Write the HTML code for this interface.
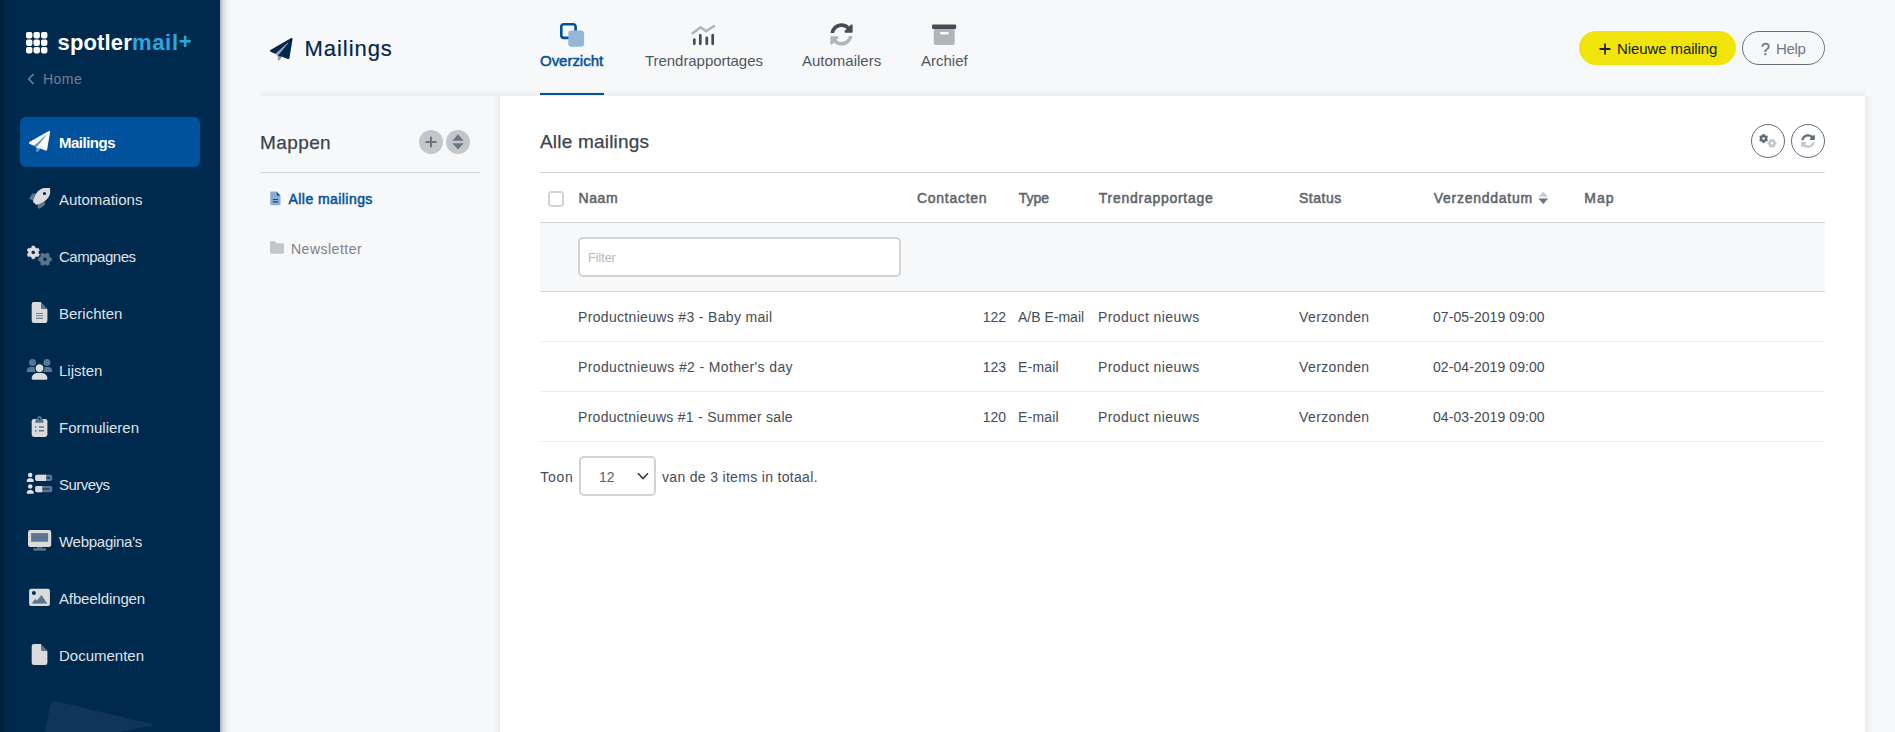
<!DOCTYPE html>
<html lang="nl">
<head>
<meta charset="utf-8">
<title>Mailings</title>
<style>
*{box-sizing:border-box;margin:0;padding:0}
html,body{width:1895px;height:732px;overflow:hidden}
body{font-family:"Liberation Sans",sans-serif;font-size:14px;color:#3d444d;background:#f7f8fa;position:relative}
.abs{position:absolute}
/* sidebar */
#side{position:absolute;left:0;top:0;width:220px;height:732px;background:#002a4d;overflow:hidden;z-index:5}
#side:before{content:"";position:absolute;left:0;top:0;width:11px;height:100%;background:linear-gradient(90deg,rgba(0,18,40,.5),rgba(0,18,40,.18) 45%,rgba(0,18,40,0))}
#sideshadow{position:absolute;left:220px;top:0;width:11px;height:732px;background:linear-gradient(90deg,rgba(0,0,0,.30),rgba(0,0,0,.15) 22%,rgba(0,0,0,.06) 50%,rgba(0,0,0,.015) 78%,rgba(0,0,0,0));z-index:4}
.logo-t{position:absolute;left:57.500px;top:29px;font-size:22px;font-weight:bold;color:#fff;letter-spacing:.15px;white-space:nowrap;line-height:28px}
.logo-t span{color:#29a8e0;letter-spacing:.7px}
.home{position:absolute;left:43px;top:70px;font-size:14px;line-height:18px;color:#75808d;letter-spacing:.45px}
.nav{position:absolute;left:20px;width:180px;height:50px;border-radius:6px;color:#dfe3e8;font-size:15px;line-height:52px;padding-left:39px;white-space:nowrap}
.nav.act{background:#00529c;color:#fff;font-weight:bold;letter-spacing:-.5px}
.nav svg{position:absolute}
/* header */
.title{position:absolute;left:304.500px;top:34.400px;font-size:22px;line-height:30px;color:#00274d;white-space:nowrap;letter-spacing:.95px;-webkit-text-stroke:.2px #00274d}
.tab{position:absolute;top:51px;font-size:15px;line-height:20px;color:#4f565e;white-space:nowrap}
.tab.act{color:#00529c;-webkit-text-stroke:.5px #00529c;letter-spacing:-.03px}
#tabline{position:absolute;left:540px;top:93px;width:64px;height:2px;background:#00529c;z-index:3}
.btn-new{position:absolute;left:1579px;top:31px;width:157px;height:34px;border-radius:17px;background:#f0e40a;color:#14181f;font-size:15px;line-height:36px;text-align:center;white-space:nowrap}
.btn-help{position:absolute;left:1742px;top:31px;width:83px;height:34px;border-radius:17px;border:1px solid #67727d;color:#6f7882;font-size:15px;line-height:34px;text-align:center;white-space:nowrap}
/* panels */
#left{position:absolute;left:260px;top:96px;width:240px;height:636px;background:#f7f8fa}
#panel{position:absolute;left:500px;top:96px;width:1365px;height:636px;background:#fff}
#topshadow{position:absolute;left:260px;top:89px;width:1605px;height:7px;background:linear-gradient(180deg,rgba(0,0,0,0),rgba(0,0,0,.012) 40%,rgba(0,0,0,.045))}
#rshadow{position:absolute;left:1865px;top:96px;width:8px;height:636px;background:linear-gradient(90deg,rgba(0,0,0,.05),rgba(0,0,0,.015) 55%,rgba(0,0,0,0))}
#lshadow{position:absolute;left:492px;top:96px;width:8px;height:636px;background:linear-gradient(270deg,rgba(0,0,0,.05),rgba(0,0,0,.015) 55%,rgba(0,0,0,0))}
.h2{position:absolute;font-size:19px;line-height:26px;color:#3d444d;white-space:nowrap;-webkit-text-stroke:.25px #3d444d}
.hr{position:absolute;height:1px;background:#d5d5d5}
.th{position:absolute;top:189px;font-size:14px;line-height:18px;-webkit-text-stroke:.5px #5c636b;color:#5c636b;white-space:nowrap}
.td{position:absolute;font-size:14px;line-height:18px;color:#454c55;white-space:nowrap}
.circ{position:absolute;width:24.200px;height:24.200px;border-radius:50%;background:#c3c6ca}
.ocirc{position:absolute;width:34px;height:34px;border-radius:50%;border:1px solid #626d78;background:#fff}
</style>
</head>
<body>
<div id="side">
  <svg class="abs" style="left:26px;top:32px" width="22" height="22" viewBox="0 0 22 22"><g fill="#fff"><rect x="0" y="0" width="6.4" height="6.4" rx="1.8"/><rect x="7.5" y="0" width="6.4" height="6.4" rx="1.8"/><rect x="15" y="0" width="6.4" height="6.4" rx="1.8"/><rect x="0" y="7.5" width="6.4" height="6.4" rx="1.8"/><rect x="7.5" y="7.5" width="6.4" height="6.4" rx="1.8"/><rect x="15" y="7.5" width="6.4" height="6.4" rx="1.8"/><rect x="0" y="15" width="6.4" height="6.4" rx="1.8"/><rect x="7.5" y="15" width="6.4" height="6.4" rx="1.8"/><rect x="15" y="15" width="6.4" height="6.4" rx="1.8"/></g></svg>
  <div class="logo-t">spotler<span>mail<i style="font-style:normal;position:relative;top:-1px">+</i></span></div>
  <svg class="abs" style="left:27px;top:73px" width="8" height="12" viewBox="0 0 8 12"><path d="M6.5 1 L1.8 6 L6.5 11" fill="none" stroke="#75808d" stroke-width="1.6"/></svg>
  <div class="home">Home</div>
  <div class="nav act" style="top:117px">Mailings</div>
  <div class="nav" style="top:174px">Automations</div>
  <div class="nav" style="top:231px;letter-spacing:-.48px">Campagnes</div>
  <div class="nav" style="top:288px">Berichten</div>
  <div class="nav" style="top:345px">Lijsten</div>
  <div class="nav" style="top:402px">Formulieren</div>
  <div class="nav" style="top:459px;letter-spacing:-.55px">Surveys</div>
  <div class="nav" style="top:516px;letter-spacing:-.27px">Webpagina's</div>
  <div class="nav" style="top:573px;letter-spacing:-.13px">Afbeeldingen</div>
  <div class="nav" style="top:630px">Documenten</div>

  <!-- sidebar icons -->
  <svg class="abs" style="left:29px;top:131px" width="21" height="21" viewBox="0 0 512 512"><path fill="#6697c4" d="M476 3.2L12.5 270.6c-18.1 10.4-15.8 35.600 2.2 43.2L121 358.4L176 407v80.500c0 23.600 28.500 32.900 42.500 15.800L282 426l124.600 52.2c14.2 6 30.400-2.900 33-18.200l72-432C515 7.800 493.300-6.800 476 3.2z"/><path fill="#fff" d="M476 3.2L12.5 270.6c-18.1 10.4-15.8 35.6 2.2 43.2L121 358.4l287.3-253.2c5.5-4.9 13.3 2.6 8.6 8.3L176 407l106 19 124.6 52.2c14.2 6 30.4-2.9 33-18.2l72-432C515 7.800 493.300-6.800 476 3.2z"/></svg>
  <svg class="abs" style="left:26px;top:185px" width="28" height="27" viewBox="26 185 28 27"><path fill="#5b7590" d="M32.300 193.400 H36.600 L33.700 200.700 L29.500 199 Q29 198.700 29.300 198.200Z M37.700 204 L44.900 201 V204.600 Q44.900 205 44.500 205.300 L39.800 208.700 Q39.300 209 38.900 208.600 L37.700 207.500Z"/><path fill="#dbdbdb" d="M50.100 188.700 Q50.100 188.100 49.500 188.100 L44.500 188.100 C40.500 188.400 36.800 191.600 34.800 196.200 L33.200 200.400 C32.900 201.300 33.100 202 33.700 202.600 L35.500 204.300 C36.100 204.800 36.900 204.900 37.700 204.600 L41.600 202.900 C46.200 200.700 49.500 197.200 50.100 193 Z"/><circle cx="44.500" cy="193.500" r="1.550" fill="#002a4d"/></svg>
  <svg class="abs" style="left:26px;top:245px" width="28" height="22" viewBox="0 0 28 22"><path fill="#dedede" fill-rule="evenodd" stroke="#dedede" stroke-width=".4" stroke-linejoin="round" d="M5.69 2.45 L5.93 0.94 L8.67 0.94 L8.91 2.45 L10.78 3.54 L12.20 2.98 L13.58 5.36 L12.39 6.32 L12.39 8.48 L13.58 9.44 L12.20 11.82 L10.78 11.26 L8.91 12.35 L8.67 13.86 L5.93 13.86 L5.69 12.35 L3.82 11.26 L2.40 11.82 L1.02 9.44 L2.21 8.48 L2.21 6.32 L1.02 5.36 L2.40 2.98 L3.82 3.54Z M5.35 7.40 a1.95 1.95 0 1 0 3.90 0 a1.95 1.95 0 1 0 -3.90 0Z"/><path fill="#5b7590" fill-rule="evenodd" stroke="#5b7590" stroke-width=".4" stroke-linejoin="round" d="M24.09 12.65 L25.65 12.89 L25.65 15.71 L24.09 15.95 L22.98 17.88 L23.55 19.35 L21.10 20.77 L20.11 19.53 L17.89 19.53 L16.90 20.77 L14.45 19.35 L15.02 17.88 L13.91 15.95 L12.35 15.71 L12.35 12.89 L13.91 12.65 L15.02 10.72 L14.45 9.25 L16.90 7.83 L17.89 9.07 L20.11 9.07 L21.10 7.83 L23.55 9.25 L22.98 10.72Z M17.05 14.30 a1.95 1.95 0 1 0 3.90 0 a1.95 1.95 0 1 0 -3.90 0Z"/></svg>
  <svg class="abs" style="left:30px;top:300px" width="20" height="25" viewBox="30 300 20 25"><path fill="#dbdbdb" d="M33.900 302 H41 V307.300 Q41 308.700 42.400 308.700 H47.400 V320.700 Q47.400 322.900 45.200 322.900 H33.900 Q31.700 322.900 31.700 320.700 V304.200 Q31.700 302 33.900 302Z"/><path fill="#5b7590" d="M41 302 L47.400 308.700 H42.400 Q41 308.700 41 307.300Z"/><path fill="#6b8299" d="M36 312.900h7v1.100h-7z M36 315.200h7v1.100h-7z M36 317.800h7v1.100h-7z"/></svg>
  <svg class="abs" style="left:25px;top:357px" width="30" height="25" viewBox="25 357 30 25"><circle cx="32.500" cy="362.500" r="3.500" fill="#5b7590"/><circle cx="46.900" cy="362.500" r="3.500" fill="#5b7590"/><path fill="#5b7590" d="M26.700 371 C26.700 368.500 28.500 366.900 30.500 366.900 H35 Q34.200 369 35.600 371.900 H27.600 Q26.700 371.900 26.700 371Z M52.300 371 C52.300 368.500 50.500 366.900 48.500 366.900 H44 Q44.800 369 43.400 371.900 H51.400 Q52.300 371.900 52.300 371Z"/><circle cx="39.500" cy="368.200" r="4.400" fill="#dbdbdb" stroke="#002a4d" stroke-width="1"/><path fill="#dbdbdb" d="M31.700 378.400 C31.700 375 34.500 372.900 37.500 372.900 H41.500 C44.500 372.900 47.400 375 47.400 378.400 Q47.400 379.800 46 379.800 H33.100 Q31.700 379.800 31.700 378.400Z"/></svg>
  <svg class="abs" style="left:30px;top:414px" width="20" height="25" viewBox="30 414 20 25"><rect x="31.700" y="418.900" width="15.700" height="18" rx="2.300" fill="#dbdbdb"/><path fill="#5b7590" d="M35.300 422.700 V420.600 Q35.300 419.200 36.700 419.200 H37.200 A2.400 2.400 0 1 1 41.800 419.200 H42.100 Q43.500 419.200 43.500 420.600 V422.700Z"/><circle cx="39.500" cy="418.700" r=".85" fill="#002a4d"/><circle cx="35.800" cy="427" r=".85" fill="#5b7590"/><circle cx="35.800" cy="430.800" r=".85" fill="#5b7590"/><rect x="38.800" y="426.300" width="5.300" height="1.400" rx=".4" fill="#5b7590"/><rect x="38.800" y="430.100" width="5.300" height="1.400" rx=".4" fill="#5b7590"/></svg>
  <svg class="abs" style="left:25px;top:471px" width="30" height="25" viewBox="25 471 30 25"><g fill="#e2e2e2"><circle cx="30.200" cy="475.100" r="2.250"/><path d="M26.700 481.200 C26.700 479.200 28.200 478.200 29.400 478.200 H31 C32.200 478.200 33.800 479.200 33.800 481.200 Q33.800 482 33 482 H27.500 Q26.700 482 26.700 481.200Z"/><circle cx="30.200" cy="486.600" r="2.250"/><path d="M26.700 492.900 C26.700 490.900 28.200 489.900 29.400 489.900 H31 C32.200 489.900 33.800 490.900 33.800 492.900 Q33.800 493.700 33 493.700 H27.500 Q26.700 493.700 26.700 492.900Z"/></g><rect x="35.200" y="474.700" width="17" height="6.300" rx="1.700" fill="#5b7590"/><rect x="46.300" y="476.900" width="3.500" height="1.800" fill="#1c3e60"/><path fill="#dbdbdb" d="M36.900 474.700 H46.100 V481 H36.900 Q35.200 481 35.200 479.300 V476.400 Q35.200 474.700 36.900 474.700Z"/><rect x="35.200" y="485.900" width="17" height="6.300" rx="1.700" fill="#5b7590"/><rect x="42.600" y="488.100" width="7" height="1.800" fill="#2a4a6b"/><path fill="#dbdbdb" d="M36.900 485.900 H42.200 V492.200 H36.900 Q35.200 492.200 35.200 490.500 V487.600 Q35.200 485.900 36.900 485.900Z"/></svg>
  <svg class="abs" style="left:26px;top:528px" width="28" height="25" viewBox="26 528 28 25"><rect x="28" y="530.100" width="23.200" height="17" rx="2.400" fill="#dbdbdb"/><rect x="31.100" y="533.100" width="17" height="8.600" fill="#5b7590"/><rect x="37.200" y="547.100" width="4.800" height="1.600" fill="#4f6a85"/><rect x="33.200" y="548.300" width="12.900" height="2.500" rx="1.200" fill="#5b7590"/></svg>
  <svg class="abs" style="left:27px;top:586px" width="26" height="23" viewBox="27 586 26 23"><rect x="29.100" y="588.700" width="20.800" height="17.400" rx="2.100" fill="#dbdbdb"/><circle cx="33.900" cy="593" r="1.950" fill="#002a4d"/><path fill="#5b7590" stroke="#5b7590" stroke-width=".6" stroke-linejoin="round" d="M32.200 603.300 L35.300 599.300 L37.200 600.800 L41.400 595.300 L46.700 603.300Z"/></svg>
  <svg class="abs" style="left:30px;top:642px" width="20" height="25" viewBox="30 642 20 25"><path fill="#dbdbdb" d="M33.900 644 H41 V649.300 Q41 650.700 42.400 650.700 H47.400 V662.700 Q47.400 664.900 45.200 664.900 H33.900 Q31.700 664.900 31.700 662.700 V646.200 Q31.700 644 33.900 644Z"/><path fill="#5b7590" d="M41 644 L47.400 650.700 H42.400 Q41 650.700 41 649.300Z"/></svg>
  <svg class="abs" style="left:40px;top:696px" width="130" height="40" viewBox="0 0 130 40"><path d="M16.500 5.300 L115 29 L60 40 L4 40 L10.500 8.500 Q11.800 4.200 16.500 5.300Z" fill="#0f3558"/></svg>
</div>
<div id="sideshadow"></div>


<!-- header icons -->
<svg class="abs" style="left:270px;top:38px" width="22.500" height="22.500" viewBox="0 0 512 512"><path fill="#94a4b5" d="M476 3.2L12.5 270.6c-18.1 10.4-15.8 35.600 2.2 43.2L121 358.4L176 407v80.500c0 23.600 28.500 32.900 42.500 15.800L282 426l124.600 52.2c14.2 6 30.400-2.900 33-18.200l72-432C515 7.800 493.300-6.800 476 3.2z"/><path fill="#00274d" d="M476 3.2L12.5 270.6c-18.1 10.4-15.8 35.6 2.2 43.2L121 358.4l287.3-253.2c5.5-4.9 13.3 2.6 8.6 8.3L176 407l106 19 124.6 52.2c14.2 6 30.4-2.9 33-18.2l72-432C515 7.800 493.300-6.800 476 3.2z"/></svg>
<svg class="abs" style="left:558px;top:21px" width="28" height="28" viewBox="558 21 28 28"><rect x="561.300" y="24.200" width="14.300" height="13.700" rx="2.600" fill="none" stroke="#00529c" stroke-width="2.600"/><rect x="568.300" y="30.400" width="15.800" height="16.300" rx="3" fill="#96b6d5"/></svg>
<svg class="abs" style="left:690px;top:23px" width="27" height="25" viewBox="690 23 27 25"><path d="M692.600 33.300 L700.600 27.200 L706 31.200 L714.200 26" fill="none" stroke="#b1b4b9" stroke-width="2.500" stroke-linecap="round" stroke-linejoin="round"/><g stroke="#454c55" stroke-width="2.700" stroke-linecap="round"><path d="M694.300 39.500V43.800M700.300 35.400V43.800M706.800 37.800V43.800M712.700 35V43.800"/></g></svg>
<svg class="abs" style="left:830.300px;top:23.300px" width="23" height="23" viewBox="0 0 512 512"><path fill="#454c55" d="M370.72 133.28C339.458 104.008 298.888 87.962 255.848 88c-77.458.068-144.328 53.178-162.791 126.85-1.344 5.363-6.122 9.15-11.651 9.15H24.103c-7.498 0-13.194-6.807-11.807-14.176C33.933 94.924 134.813 8 256 8c66.448 0 126.791 26.136 171.315 68.685L463.03 40.97C478.149 25.851 504 36.559 504 57.941V192c0 13.255-10.745 24-24 24H345.941c-21.382 0-32.090-25.851-16.971-40.971l41.750-41.749z"/><path fill="#b1b4b9" d="M32 296h134.059c21.382 0 32.090 25.851 16.971 40.971l-41.750 41.750c31.262 29.273 71.835 45.319 114.876 45.280 77.418-.070 144.315-53.144 162.787-126.849 1.344-5.363 6.122-9.150 11.651-9.150h57.304c7.498 0 13.194 6.807 11.807 14.176C478.067 417.076 377.187 504 256 504c-66.448 0-126.791-26.136-171.315-68.685L48.970 471.030C33.851 486.149 8 475.441 8 454.059V320c0-13.255 10.745-24 24-24z"/></svg>
<svg class="abs" style="left:930px;top:23px" width="28" height="24" viewBox="930 23 28 24"><path fill="#b1b4b9" d="M933.800 29 H954.700 V43 Q954.700 45 952.700 45 H935.800 Q933.800 45 933.800 43Z"/><rect x="932" y="24.500" width="24.200" height="4.600" rx="1.300" fill="#454c55"/><rect x="940" y="32" width="8.700" height="2.600" rx="1" fill="#f7f8fa"/></svg>
<div class="title">Mailings</div>
<div class="tab act" style="left:540px">Overzicht</div>
<div class="tab" style="left:645px;letter-spacing:-.05px">Trendrapportages</div>
<div class="tab" style="left:802px">Automailers</div>
<div class="tab" style="left:921px">Archief</div>
<div class="btn-new"><svg class="abs" style="left:20px;top:12px" width="12" height="12" viewBox="0 0 12 12"><path d="M6 .6V11.400M.6 6H11.400" stroke="#1d2430" stroke-width="1.800" fill="none"/></svg><span style="position:absolute;left:38px;top:0;letter-spacing:-.1px">Nieuwe mailing</span></div>
<div class="btn-help"><span style="position:absolute;left:18px;top:.700px;-webkit-text-stroke:.4px #6f7882;font-size:16px">?</span><span style="position:absolute;left:33px;top:0;letter-spacing:-.3px">Help</span></div>

<div id="topshadow"></div>
<div id="left"></div>
<div id="rshadow"></div>
<div id="lshadow"></div>
<div id="panel"></div>
<div id="tabline"></div>

<div class="h2" style="left:260px;top:130px;letter-spacing:.4px">Mappen</div>
<div class="circ" style="left:418.800px;top:129.900px"></div>
<div class="circ" style="left:446.300px;top:129.900px"></div>
<div class="hr" style="left:260px;top:172px;width:220px"></div>
<div class="td" style="left:288.500px;top:190px;color:#00529c;-webkit-text-stroke:.5px #00529c;letter-spacing:.44px">Alle mailings</div>
<div class="td" style="left:291px;top:240px;color:#7d8187;letter-spacing:.5px">Newsletter</div>

<div class="h2" style="left:540px;top:129px;letter-spacing:.2px">Alle mailings</div>
<div class="ocirc" style="left:1751px;top:124px"></div>
<div class="ocirc" style="left:1791px;top:124px"></div>
<div class="hr" style="left:540px;top:172px;width:1285px"></div>
<div class="abs" style="left:548.200px;top:191.200px;width:15.600px;height:15.600px;border:2px solid #d3d3d3;border-radius:3.500px;background:#fff"></div>
<div class="th" style="left:578.500px;letter-spacing:.6px">Naam</div>
<div class="th" style="left:917px;letter-spacing:.72px">Contacten</div>
<div class="th" style="left:1018.700px">Type</div>
<div class="th" style="left:1098.800px;letter-spacing:.73px">Trendrapportage</div>
<div class="th" style="left:1299px;letter-spacing:.5px">Status</div>
<div class="th" style="left:1433.700px;letter-spacing:.74px">Verzenddatum</div>
<div class="th" style="left:1584.300px;letter-spacing:.95px">Map</div>
<div class="hr" style="left:540px;top:222px;width:1285px"></div>
<div class="abs" style="left:540px;top:223px;width:1285px;height:68px;background:#f7f8fa"></div>
<div class="abs" style="left:578px;top:237px;width:323px;height:40px;border:2px solid #d3d3d3;border-radius:5px;background:#fff"></div>
<div class="abs" style="left:588px;top:250px;font-size:12.500px;line-height:16px;color:#b4b7bc">Filter</div>
<div class="hr" style="left:540px;top:291px;width:1285px"></div>

<div class="td" style="left:578px;top:308px;letter-spacing:.33px">Productnieuws #3 - Baby mail</div>
<div class="td" style="left:578px;top:358px;letter-spacing:.37px">Productnieuws #2 - Mother's day</div>
<div class="td" style="left:578px;top:408px;letter-spacing:.29px">Productnieuws #1 - Summer sale</div>
<div class="td num" style="left:960px;top:308px;width:46px;text-align:right">122</div>
<div class="td" style="left:1018px;top:308px">A/B E-mail</div>
<div class="td" style="left:1098px;top:308px;letter-spacing:.43px">Product nieuws</div>
<div class="td" style="left:1299px;top:308px;letter-spacing:.4px">Verzonden</div>
<div class="td" style="letter-spacing:.07px;left:1433px;top:308px">07-05-2019 09:00</div>
<div class="td num" style="left:960px;top:358px;width:46px;text-align:right">123</div>
<div class="td" style="left:1018px;top:358px;letter-spacing:.2px">E-mail</div>
<div class="td" style="left:1098px;top:358px;letter-spacing:.43px">Product nieuws</div>
<div class="td" style="left:1299px;top:358px;letter-spacing:.4px">Verzonden</div>
<div class="td" style="letter-spacing:.07px;left:1433px;top:358px">02-04-2019 09:00</div>
<div class="td num" style="left:960px;top:408px;width:46px;text-align:right">120</div>
<div class="td" style="left:1018px;top:408px;letter-spacing:.2px">E-mail</div>
<div class="td" style="left:1098px;top:408px;letter-spacing:.43px">Product nieuws</div>
<div class="td" style="left:1299px;top:408px;letter-spacing:.4px">Verzonden</div>
<div class="td" style="letter-spacing:.07px;left:1433px;top:408px">04-03-2019 09:00</div>
<div class="hr" style="left:540px;top:341px;width:1285px;background:#ececec"></div>
<div class="hr" style="left:540px;top:391px;width:1285px;background:#ececec"></div>
<div class="hr" style="left:540px;top:441px;width:1285px;background:#ececec"></div>

<div class="td" style="left:540.300px;top:468px;letter-spacing:.75px">Toon</div>
<div class="abs" style="left:579px;top:456px;width:77px;height:40px;border:2px solid #d3d3d3;border-radius:5px;background:#fff"></div>
<div class="td" style="left:599px;top:468px;color:#5c636b">12</div>
<div class="td" style="left:662px;top:468px;letter-spacing:.32px">van de 3 items in totaal.</div>

<!-- panel icons -->
<svg class="abs" style="left:418.800px;top:130px" width="24" height="24" viewBox="0 0 24 24"><path d="M12 6.700V17.300M6.500 12H17.500" stroke="#6c757d" stroke-width="2" fill="none"/></svg>
<svg class="abs" style="left:446.400px;top:130px" width="24" height="24" viewBox="0 0 24 24"><path d="M12 4.500 L17.300 10.500 H6.700Z M12 19.200 L17.300 13.600 H6.700Z" fill="#6c757d" stroke="#6c757d" stroke-width=".4" stroke-linejoin="round"/></svg>
<svg class="abs" style="left:269px;top:189.500px" width="13.650" height="16.800" viewBox="0 0 13 16"><path fill="#8bafd4" d="M2.300 1.500 H7.200 V4.600 Q7.200 5.400 8 5.400 H11 V13.300 Q11 14.500 9.800 14.500 H2.300 Q1.100 14.500 1.100 13.300 V2.700 Q1.100 1.500 2.300 1.500Z"/><path fill="#00529c" d="M7.200 1.500 L11 5.400 H8 Q7.200 5.400 7.200 4.600Z"/><path fill="#00529c" d="M3.600 8.600h5v1h-5z M3.600 10.800h5v1h-5z"/></svg>
<svg class="abs" style="left:269.200px;top:240.200px" width="16" height="15" viewBox="0 0 16 14" preserveAspectRatio="none"><path fill="#c3c6ca" d="M2.300 1.200 H5.800 L7.600 3 H13.700 Q15 3 15 4.300 V11.500 Q15 12.800 13.700 12.800 H2.300 Q1 12.800 1 11.500 V2.500 Q1 1.200 2.300 1.200Z"/></svg>
<svg class="abs" style="left:1758px;top:133px" width="20" height="16" viewBox="0 0 20 16"><path fill="#5f6b77" fill-rule="evenodd" d="M4.40 1.95 L4.60 1.01 L6.60 1.01 L6.80 1.95 L8.08 2.69 L8.99 2.39 L9.99 4.12 L9.28 4.76 L9.28 6.24 L9.99 6.88 L8.99 8.61 L8.08 8.31 L6.80 9.05 L6.60 9.99 L4.60 9.99 L4.40 9.05 L3.12 8.31 L2.21 8.61 L1.21 6.88 L1.92 6.24 L1.92 4.76 L1.21 4.12 L2.21 2.39 L3.12 2.69Z M4.30 5.50 a1.30 1.30 0 1 0 2.60 0 a1.30 1.30 0 1 0 -2.60 0Z"/><path fill="#c2c7cc" fill-rule="evenodd" d="M17.55 9.10 L18.49 9.30 L18.49 11.30 L17.55 11.50 L16.81 12.78 L17.11 13.69 L15.38 14.69 L14.74 13.98 L13.26 13.98 L12.62 14.69 L10.89 13.69 L11.19 12.78 L10.45 11.50 L9.51 11.30 L9.51 9.30 L10.45 9.10 L11.19 7.82 L10.89 6.91 L12.62 5.91 L13.26 6.62 L14.74 6.62 L15.38 5.91 L17.11 6.91 L16.81 7.82Z M12.70 10.30 a1.30 1.30 0 1 0 2.60 0 a1.30 1.30 0 1 0 -2.60 0Z"/></svg>
<svg class="abs" style="left:1801px;top:134px" width="14" height="14" viewBox="0 0 512 512"><path fill="#5f6b77" d="M370.72 133.28C339.458 104.008 298.888 87.962 255.848 88c-77.458.068-144.328 53.178-162.791 126.85-1.344 5.363-6.122 9.15-11.651 9.15H24.103c-7.498 0-13.194-6.807-11.807-14.176C33.933 94.924 134.813 8 256 8c66.448 0 126.791 26.136 171.315 68.685L463.03 40.97C478.149 25.851 504 36.559 504 57.941V192c0 13.255-10.745 24-24 24H345.941c-21.382 0-32.090-25.851-16.971-40.971l41.750-41.749z"/><path fill="#c2c7cc" d="M32 296h134.059c21.382 0 32.090 25.851 16.971 40.971l-41.750 41.750c31.262 29.273 71.835 45.319 114.876 45.280 77.418-.070 144.315-53.144 162.787-126.849 1.344-5.363 6.122-9.150 11.651-9.150h57.304c7.498 0 13.194 6.807 11.807 14.176C478.067 417.076 377.187 504 256 504c-66.448 0-126.791-26.136-171.315-68.685L48.970 471.030C33.851 486.149 8 475.441 8 454.059V320c0-13.255 10.745-24 24-24z"/></svg>
<svg class="abs" style="left:1538px;top:191px" width="11" height="14" viewBox="0 0 11 14"><path d="M5.250 .9 L9.500 5.600 H1Z" fill="#c5c9cd" stroke="#c5c9cd" stroke-width=".5" stroke-linejoin="round"/><path d="M5.250 12.700 L9.600 7.800 H.9Z" fill="#66727e" stroke="#66727e" stroke-width=".5" stroke-linejoin="round"/></svg>
<svg class="abs" style="left:636px;top:470px" width="14" height="12" viewBox="0 0 14 12"><path d="M2 3.300 L7 8.600 L12 3.300" fill="none" stroke="#30363d" stroke-width="1.600"/></svg>
</body>
</html>
